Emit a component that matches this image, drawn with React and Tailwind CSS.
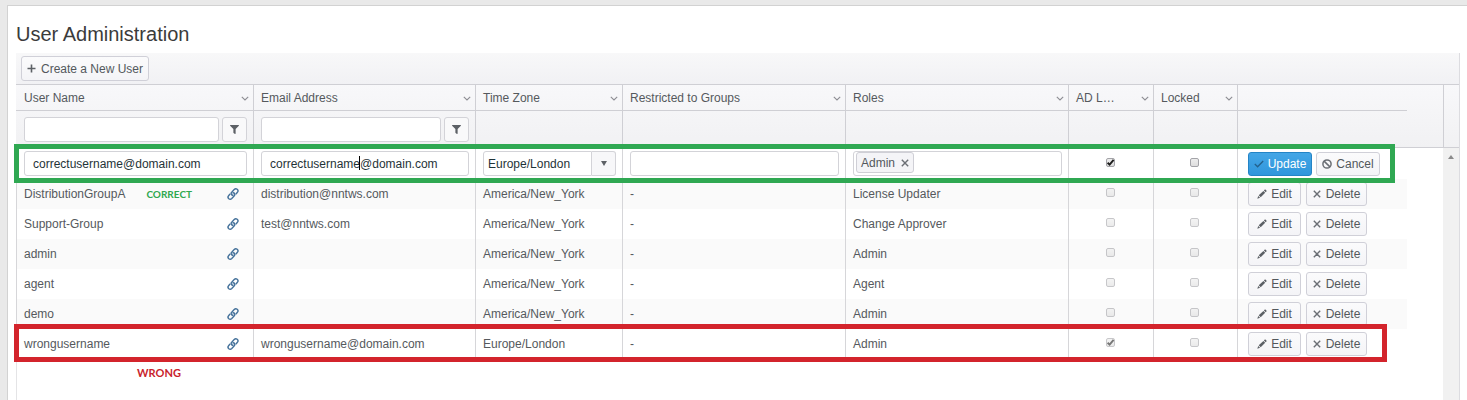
import { FaFilter } from "react-icons/fa";

const users = [
  { name: "DistributionGroupA", email: "distribution@nntws.com", zone: "America/New_York", role: "License Updater", note: "CORRECT" },
  { name: "Support-Group", email: "test@nntws.com", zone: "America/New_York", role: "Change Approver" },
  { name: "admin", email: "", zone: "America/New_York", role: "Admin" },
  { name: "agent", email: "", zone: "America/New_York", role: "Agent" },
  { name: "demo", email: "", zone: "America/New_York", role: "Admin" },
  { name: "wrongusername", email: "wrongusername@domain.com", zone: "Europe/London", role: "Admin", ad: true },
];

const columns = ["User Name", "Email Address", "Time Zone", "Restricted to Groups", "Roles", "AD L…", "Locked", ""];

const cell = "border-l border-[#d6d6d9] pl-[7px] pr-[6px]";
const checkCell = "border-l border-[#d6d6d9] pb-[3px] pr-[2px]";
const field = "h-[25px] w-full min-w-0 rounded-[3px] border border-[#d3d3d8] bg-white text-[#1f3338] outline-none";
const button =
  "flex items-center rounded-[3px] border border-[#d0d0d8] bg-linear-to-b from-[#fbfbfc] to-[#f4f4f7] text-[#53585c]";

function Columns() {
  return (
    <colgroup>
      <col className="w-[237px]" />
      <col className="w-[222px]" />
      <col className="w-[147px]" />
      <col />
      <col />
      <col className="w-[85px]" />
      <col className="w-[84px]" />
      <col className="w-[170px]" />
    </colgroup>
  );
}

function Chevron() {
  return (
    <svg viewBox="0 0 8 5" className="mt-px h-[5px] w-2 shrink-0" fill="none" stroke="#8d8d93" strokeWidth="1.1">
      <path d="M0.8 0.8 L4 4 L7.2 0.8" />
    </svg>
  );
}

function Cross() {
  return (
    <svg viewBox="0 0 8 8" className="size-2 shrink-0" fill="none" stroke="#6a6e74" strokeWidth="1.4">
      <path d="M0.8 0.8 L7.2 7.2 M7.2 0.8 L0.8 7.2" />
    </svg>
  );
}

function Pencil() {
  return (
    <svg viewBox="0 0 10 10" className="size-[10px] shrink-0" fill="#5d6166">
      <path d="M0.3 9.7 L1.2 6.9 L3.1 8.8 Z M1.7 6.3 L6.4 1.9 L8.2 3.7 L3.7 8.3 Z M6.9 1.4 L7.8 0.6 Q8.3 0.3 8.8 0.8 L9.4 1.4 Q9.8 1.9 9.4 2.4 L8.7 3.2 Z" />
    </svg>
  );
}

function Ban() {
  return (
    <svg viewBox="0 0 10 10" className="size-[10px] shrink-0" fill="none" stroke="#6a6e74" strokeWidth="1.5">
      <circle cx="5" cy="5" r="4.1" />
      <path d="M2.1 2.1 L7.9 7.9" />
    </svg>
  );
}

function ChainLink() {
  return (
    <svg viewBox="0 0 12 12" className="size-3" fill="none" stroke="#44719a" strokeWidth="1.4" strokeLinecap="round">
      <path d="M4.6 6.6 C3.9 5.7 4 4.9 4.7 4.2 L7.2 1.5 C8.1 0.6 9.3 0.6 10.2 1.3 C11.2 2.2 11.2 3.4 10.4 4.3 L9.2 5.7" />
      <path d="M7.4 5.4 C8.1 6.3 8 7.1 7.3 7.8 L4.8 10.5 C3.9 11.4 2.7 11.4 1.8 10.7 C0.8 9.8 0.8 8.6 1.6 7.7 L2.8 6.3" />
      <path d="M4.6 6.6 C5 7.1 5.6 7.3 6 7.1 M7.4 5.4 C7 4.9 6.4 4.7 6 4.9" />
    </svg>
  );
}

function Check({ label, checked = false, disabled = false }) {
  return (
    <span className={disabled ? "mx-auto grid size-[9px] opacity-60" : "mx-auto grid size-[9px]"}>
      <input
        type="checkbox"
        aria-label={label}
        defaultChecked={checked}
        disabled={disabled}
        className="peer col-start-1 row-start-1 size-[9px] appearance-none rounded-[2px] border border-[#a3a3a8] bg-linear-to-b from-[#ededed] to-[#dedede]"
      />
      <svg
        viewBox="0 0 9 9"
        className="pointer-events-none invisible col-start-1 row-start-1 size-[9px] peer-checked:visible"
        fill="none"
        stroke="#1d1d1d"
        strokeWidth="1.9"
      >
        <path d="M1.6 4.7 L3.6 6.6 L7.6 1.8" />
      </svg>
    </span>
  );
}

function FilterField({ label }) {
  return (
    <div className="flex gap-[3px]">
      <input aria-label={`Filter by ${label}`} className={`${field} flex-1 px-2`} />
      <button
        aria-label={`${label} filter options`}
        className="flex size-[25px] shrink-0 items-center justify-center rounded-[3px] border border-[#d3d3d8] bg-[#f9f9fa]"
      >
        <FaFilter size={9} color="#5d6166" />
      </button>
    </div>
  );
}

function EditRow() {
  return (
    <tr className="h-[31px]">
      <td className={cell}>
        <input aria-label="User Name" defaultValue="correctusername@domain.com" className={`${field} block px-2`} />
      </td>
      <td className={cell}>
        <div className="relative">
          <input aria-label="Email Address" defaultValue="correctusername@domain.com" className={`${field} block px-2`} />
          <span className="absolute top-[5px] left-[98px] h-[14px] w-px bg-black" />
        </div>
      </td>
      <td className={cell}>
        <div className="flex">
          <select aria-label="Time Zone" className={`${field} flex-1 appearance-none rounded-r-none px-1`}>
            <option>Europe/London</option>
          </select>
          <button
            aria-label="Open time zones"
            className="flex h-[25px] w-6 shrink-0 items-center justify-center rounded-r-[3px] border border-l-0 border-[#d3d3d8] bg-[#f7f7f9]"
          >
            <svg viewBox="0 0 6 5" className="h-[5px] w-[6px]" fill="#5d6166">
              <path d="M0 0 H6 L3 5 Z" />
            </svg>
          </button>
        </div>
      </td>
      <td className={cell}>
        <input aria-label="Restricted to Groups" className={`${field} block px-2`} />
      </td>
      <td className={cell}>
        <div className={`${field} flex items-start pl-[2px]`}>
          <span className="flex h-[21px] items-center gap-[6px] rounded-[3px] border border-[#cfcfd6] bg-[#f4f4f7] px-1 text-[#53585c]">
            Admin
            <button aria-label="Remove Admin">
              <Cross />
            </button>
          </span>
          <input aria-label="Roles" className="min-w-0 flex-1 outline-none" />
        </div>
      </td>
      <td className={checkCell}>
        <Check label="AD Login" checked />
      </td>
      <td className={checkCell}>
        <Check label="Locked" />
      </td>
      <td className="border-l border-[#d6d6d9] pl-[10px]">
        <div className="flex gap-1">
          <button className="flex h-6 w-16 items-center justify-center gap-1 rounded-[3px] border border-[#2484c6] bg-linear-to-b from-[#44a6e6] to-[#2f96dc] text-white">
            <svg viewBox="0 0 10 8" className="h-2 w-[10px] shrink-0" fill="none" stroke="#24618b" strokeWidth="1.3">
              <path d="M0.8 4 L3.6 6.8 L9.2 1" />
            </svg>
            Update
          </button>
          <button className={`${button} h-6 w-16 justify-center gap-1`}>
            <Ban />
            Cancel
          </button>
        </div>
      </td>
    </tr>
  );
}

function UserRow({ user }) {
  return (
    <tr className="h-[30px] odd:bg-[#fafafa] even:bg-white">
      <td className={cell}>
        <div className="flex items-center pr-2">
          <span>{user.name}</span>
          {user.note && (
            <span className="ml-[21px] font-['Lato',sans-serif] text-[10px] leading-4 font-bold text-[#2fa84f]">{user.note}</span>
          )}
          <a href="#" aria-label={`Link for ${user.name}`} className="ml-auto">
            <ChainLink />
          </a>
        </div>
      </td>
      <td className={cell}>{user.email}</td>
      <td className={cell}>{user.zone}</td>
      <td className={cell}>-</td>
      <td className={cell}>{user.role}</td>
      <td className={checkCell}>
        <Check label={`AD Login ${user.name}`} checked={user.ad} disabled />
      </td>
      <td className={checkCell}>
        <Check label={`Locked ${user.name}`} disabled />
      </td>
      <td className="border-l border-[#d6d6d9] pl-[10px]">
        <div className="flex gap-[5px]">
          <button className={`${button} h-6 w-[53px] justify-center gap-1`}>
            <Pencil />
            Edit
          </button>
          <button className={`${button} h-6 w-[61px] justify-center gap-[5px]`}>
            <Cross />
            Delete
          </button>
        </div>
      </td>
    </tr>
  );
}

export default function App() {
  return (
    <div className="flex min-h-screen flex-col bg-[#e9e9e9] pt-[5px] pl-[7px] font-['Liberation_Sans',Arial,sans-serif] text-xs text-[#55595d]">
      <main className="flex flex-1 flex-col border-t border-l border-[#d2d2d2] bg-white pr-[7px] pl-2">
        <h1 className="pt-4 pb-[7px] text-xl leading-6 text-[#3b3b3b]">User Administration</h1>
        <section className="flex flex-1 flex-col border-r border-[#dcdce0]">
          <div className="bg-linear-to-b from-[#f8f8f9] to-[#f1f1f4] px-[5px] py-[3px]">
            <button className={`${button} h-[25px] gap-[5px] px-[5px]`}>
              <svg viewBox="0 0 9 9" className="size-[9px]" fill="none" stroke="#5d6166" strokeWidth="1.6">
                <path d="M4.5 0.5 V8.5 M0.5 4.5 H8.5" />
              </svg>
              Create a New User
            </button>
          </div>

          <div className="flex border-y border-[#cfcfd4] bg-linear-to-b from-[#f8f8fa] to-[#f1f1f3]">
            <div className="flex-1 pr-9">
              <table className="w-full table-fixed border-separate border-spacing-0">
                <Columns />
                <thead>
                  <tr className="h-[26px]">
                    {columns.map((name, i) => (
                      <th
                        key={i}
                        className="border-b border-l border-[#cfcfd4] pr-1 pl-[7px] text-left font-normal first:border-l-0 first:pl-2"
                      >
                        {name && (
                          <div className="flex items-center justify-between">
                            <span>{name}</span>
                            <Chevron />
                          </div>
                        )}
                      </th>
                    ))}
                  </tr>
                  <tr className="h-9">
                    {columns.map((name, i) => (
                      <td
                        key={i}
                        className="border-l border-[#cfcfd4] pr-[6px] pl-[7px] first:border-l-0 first:pl-2"
                      >
                        {i < 2 && <FilterField label={name} />}
                      </td>
                    ))}
                  </tr>
                </thead>
              </table>
            </div>
            <div className="w-4 border-l border-[#cfcfd4]" />
          </div>

          <div className="flex flex-1">
            <div className="flex-1 border-l border-[#e4e4e6] pr-9">
              <div className="relative -ml-px">
                <table className="w-full table-fixed border-separate border-spacing-0">
                  <Columns />
                  <thead>
                    <EditRow />
                  </thead>
                  <tbody>
                    {users.map((user) => (
                      <UserRow key={user.name} user={user} />
                    ))}
                  </tbody>
                </table>
                <div className="pointer-events-none absolute -top-1 right-3 -left-[2px] h-[39px] border-[5px] border-[#2fa852]" />
                <div className="pointer-events-none absolute right-5 -bottom-[3px] -left-[2px] h-[38px] border-[5px] border-[#d3242c]" />
              </div>
              <p className="pt-[6px] pl-[120px] font-['Lato',sans-serif] text-[11px] leading-4 font-bold text-[#c9232c]">WRONG</p>
            </div>
            <div className="flex w-4 justify-center bg-[#f1f1f1] pt-[7px]">
              <svg viewBox="0 0 6 4" className="h-1 w-[6px]" fill="#8a8a8a">
                <path d="M0 4 H6 L3 0 Z" />
              </svg>
            </div>
          </div>
        </section>
      </main>
    </div>
  );
}
